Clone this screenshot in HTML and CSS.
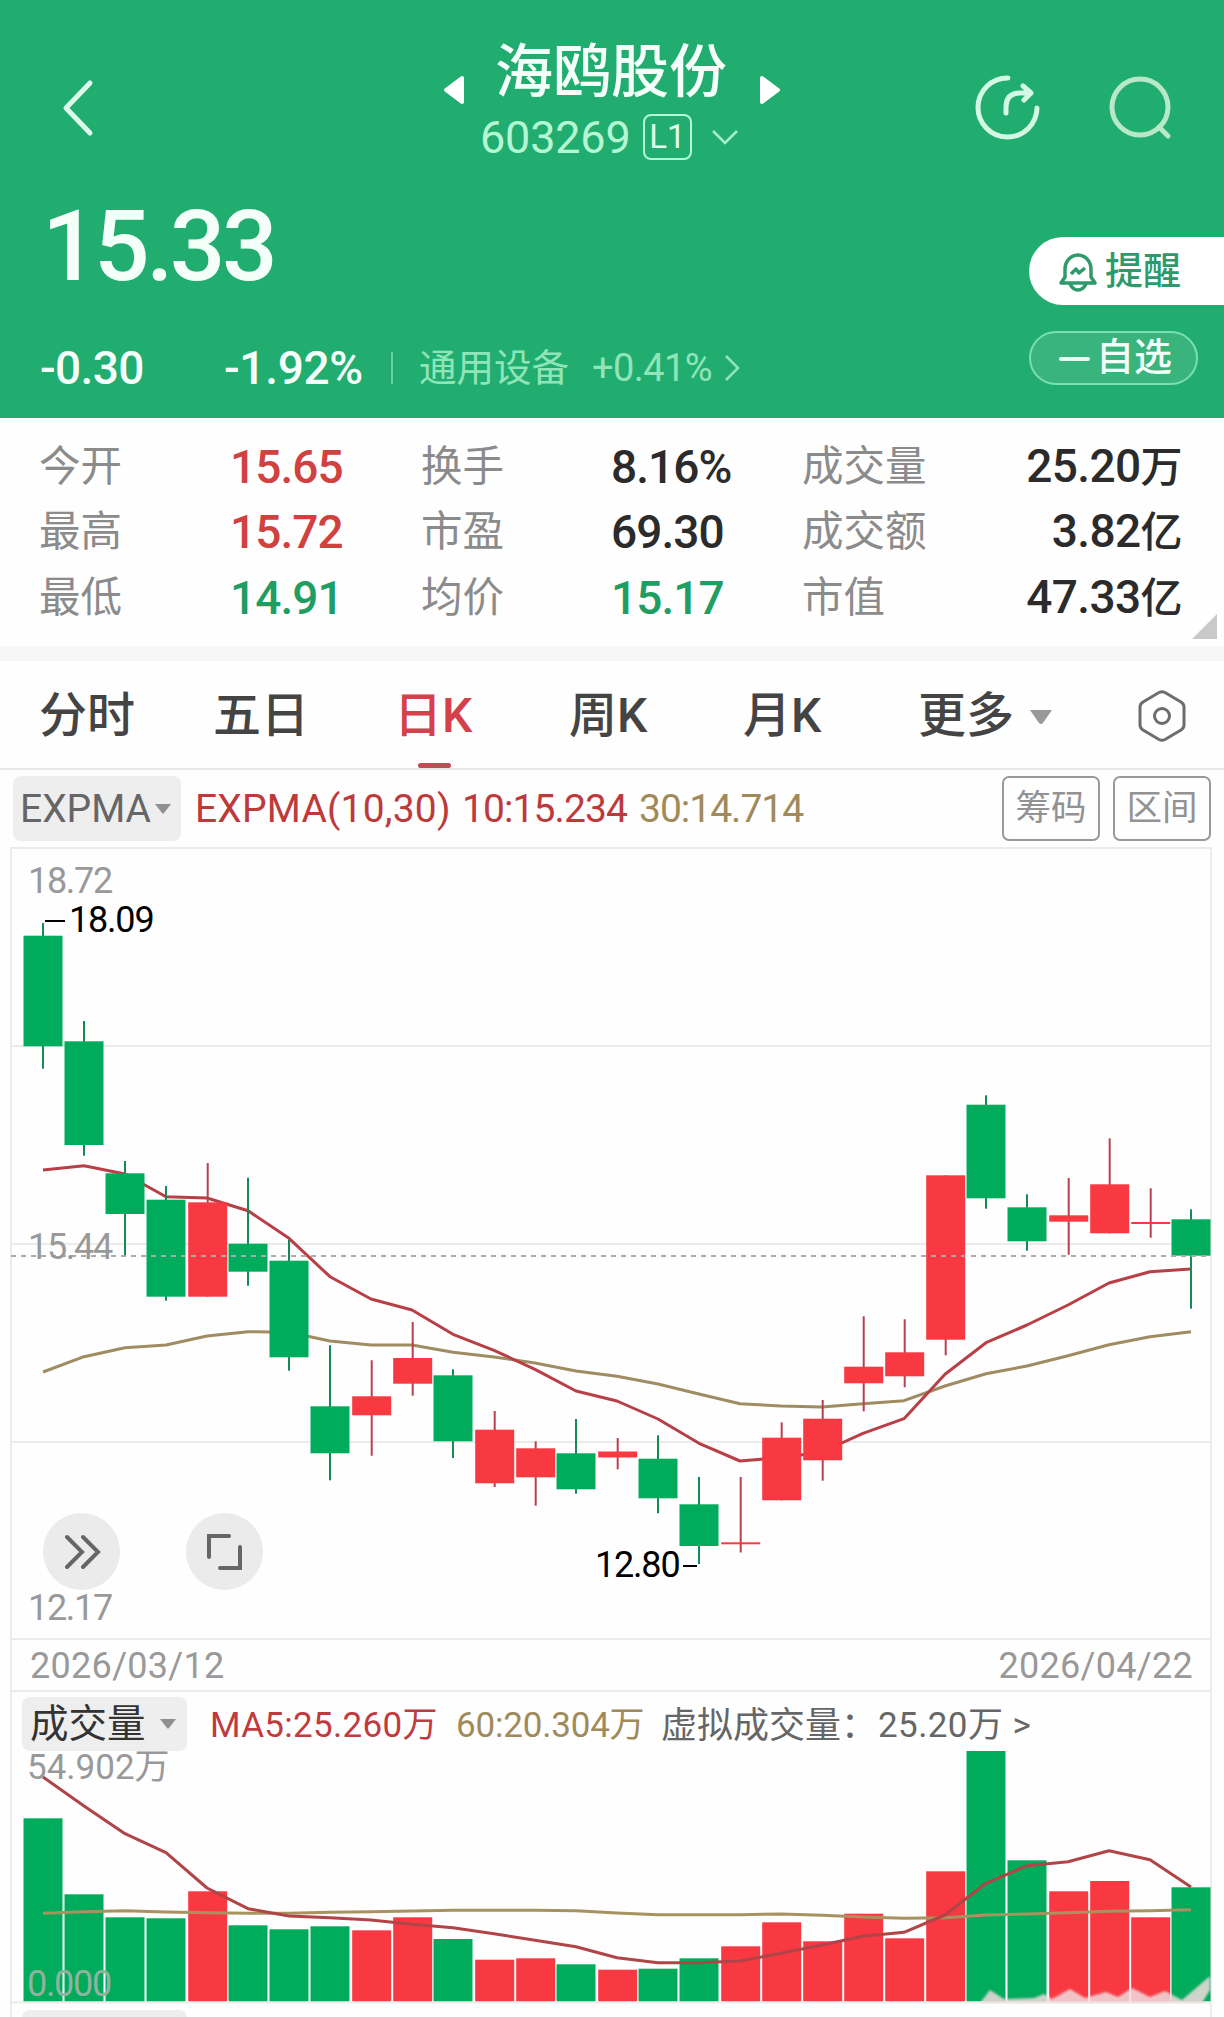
FILE: index.html
```html
<!DOCTYPE html>
<html lang="zh-CN">
<head>
    <meta charset="UTF-8">
    <meta name="viewport" content="width=device-width, initial-scale=1.0">
    <title>海鸥股份 603269</title>
    <link rel="stylesheet" href="styles.css">
</head>

<body>
    <!-- 顶部报价 -->
    <header class="quote">
        <div class="nav">
            <svg class="back" width="36" height="64" viewBox="0 0 36 64"><path d="M31 8 L7 33 L31 58"/></svg>
            <div class="stock">
                <div class="stock-row">
                    <svg class="tri" width="22" height="30" viewBox="0 0 22 30"><path d="M19 3 V27 L3 15 Z"/></svg>
                    <h1>海鸥股份</h1>
                    <svg class="tri" width="22" height="30" viewBox="0 0 22 30"><path d="M3 3 V27 L19 15 Z"/></svg>
                </div>
                <div class="code-row">
                    <span class="code">603269</span>
                    <span class="level">L1</span>
                    <svg class="down" width="28" height="18" viewBox="0 0 28 18"><path d="M2 3 L14 15 L26 3"/></svg>
                </div>
            </div>
            <div class="actions">
                <svg width="66" height="66" viewBox="0 0 66 66">
                    <path d="M33 3 A29.500 29.500 0 1 0 62 33"/>
                    <path d="M31 38 V32 Q31 19 44 18 H55 M48 11 L56 18 L49 25"/>
                </svg>
                <svg class="search" width="66" height="66" viewBox="0 0 66 66">
                    <circle cx="32" cy="32" r="28"/>
                    <path d="M51 52 L60 61"/>
                </svg>
            </div>
        </div>

        <div class="quote-body">
            <div class="quote-left">
                <div class="price">15.33</div>
                <div class="change-row">
                    <span class="change">-0.30</span>
                    <span class="percent">-1.92%</span>
                    <span class="divider"></span>
                    <span class="sector">通用设备</span>
                    <span class="sector-num">+0.41%</span>
                    <svg class="more" width="18" height="30" viewBox="0 0 18 30"><path d="M3 3 L15 15 L3 27"/></svg>
                </div>
            </div>
            <div class="quote-buttons">
                <div class="remind">
                    <svg width="38" height="40" viewBox="0 0 38 40">
                        <path d="M2 31 L6 25 V17 A13 14 0 0 1 32 17 V25 L36 31 Z M11 32 Q14 38 19 38 Q24 38 27 32"/>
                        <path d="M12 22 L17 17 L20 21 L26 16"/>
                    </svg>
                    <span>提醒</span>
                </div>
                <div class="watch"><i></i><span>自选</span></div>
            </div>
        </div>
    </header>

    <!-- 行情数据 -->
    <section class="stats">
        <span class="label">今开</span><span class="value up">15.65</span>
        <span class="label">换手</span><span class="value">8.16%</span>
        <span class="label">成交量</span><span class="value right">25.20<b>万</b></span>
        <span class="label">最高</span><span class="value up">15.72</span>
        <span class="label">市盈</span><span class="value">69.30</span>
        <span class="label">成交额</span><span class="value right">3.82<b>亿</b></span>
        <span class="label">最低</span><span class="value fall">14.91</span>
        <span class="label">均价</span><span class="value fall">15.17</span>
        <span class="label">市值</span><span class="value right">47.33<b>亿</b></span>
    </section>

    <!-- 周期切换 -->
    <nav class="tabs">
        <a>分时</a>
        <a>五日</a>
        <a class="active">日K</a>
        <a>周K</a>
        <a>月K</a>
        <a class="tab-more">更多<svg width="24" height="16" viewBox="0 0 24 16"><path d="M1 1 H23 L14 14 Q12 16 10 14 Z"/></svg></a>
        <svg class="setting" width="50" height="54" viewBox="0 0 50 54">
            <path d="M22 3.500 Q25 2 28 3.500 L44 13 Q47 15 47 18 V36 Q47 39 44 41 L28 50.500 Q25 52 22 50.500 L6 41 Q3 39 3 36 V18 Q3 15 6 13 Z"/>
            <circle cx="25" cy="27" r="7.500"/>
        </svg>
    </nav>

    <!-- 指标 -->
    <div class="indicator">
        <div class="pick">EXPMA<svg width="16" height="12" viewBox="0 0 16 12"><path d="M0 1 H16 L9 10 Q8 11 7 10 Z"/></svg></div>
        <span class="ind-name">EXPMA(10,30)</span>
        <span class="ind-fast">10:15.234</span>
        <span class="ind-slow">30:14.714</span>
        <div class="ind-buttons">
            <span>筹码</span>
            <span>区间</span>
        </div>
    </div>

    <main class="charts">
        <!-- K线 -->
        <div class="kline">
            <svg id="kline" width="1200" height="793" viewBox="11 847 1200 793"></svg>
            <span class="axis axis-top">18.72</span>
            <span class="axis axis-mid">15.44</span>
            <span class="axis axis-low">12.17</span>
            <span class="mark mark-high">18.09</span>
            <span class="mark mark-low">12.80</span>
            <div class="tools">
                <div class="tool"><svg width="40" height="40" viewBox="0 0 40 40"><path d="M5 5 L20 20 L5 35 M21 5 L36 20 L21 35"/></svg></div>
                <div class="tool"><svg width="40" height="40" viewBox="0 0 40 40"><path d="M24 4 H4 V25 M35 15 V36 H15"/></svg></div>
            </div>
        </div>
        <div class="dates">
            <span>2026/03/12</span>
            <span>2026/04/22</span>
        </div>

        <!-- 成交量 -->
        <div class="volume">
            <svg id="volume" width="1200" height="314" viewBox="11 1690 1200 314"></svg>
            <div class="volume-head">
                <div class="pick">成交量<svg width="16" height="12" viewBox="0 0 16 12"><path d="M0 1 H16 L9 10 Q8 11 7 10 Z"/></svg></div>
                <span class="vol-fast">MA5:25.260万</span>
                <span class="vol-slow">60:20.304万</span>
                <span class="vol-virtual">虚拟成交量：</span>
                <span class="vol-num">25.20万 &gt;</span>
            </div>
            <span class="axis axis-max">54.902万</span>
            <span class="axis axis-zero">0.000</span>
        </div>
        <div class="next"><div class="next-pick"></div></div>
    </main>

    <script src="chart.js"></script>
</body>
</html>
```
FILE: styles.css
```css
body {
    font-family: Roboto, "Noto Sans CJK SC", sans-serif;
    background-color: #fefefe;
    color: #2b2b2b;
    margin: 0;
    width: 1224px;
    height: 2017px;
    overflow: hidden;
}

* {
    box-sizing: border-box;
}

svg {
    display: block;
    flex: none;
}

span {
    white-space: nowrap;
}

/* 顶部报价 */
.quote {
    height: 418px;
    background-color: #22ad70;
    color: #f4fff9;
    overflow: hidden;
}

.nav {
    display: flex;
    align-items: flex-start;
    height: 190px;
    padding-left: 59px;
}

.back {
    margin-top: 75px;
    fill: none;
    stroke: #dcfbea;
    stroke-width: 5;
    stroke-linecap: round;
    stroke-linejoin: round;
}

.stock {
    width: 350px;
    margin: 31px 0 0 342px;
}

.stock-row {
    display: flex;
    align-items: center;
    height: 80px;
    padding-left: 6px;
}

.stock-row h1 {
    font-size: 58px;
    font-weight: 500;
    line-height: 80px;
    margin: 2px 32px 0 30px;
    width: 232px;
    white-space: nowrap;
}

.tri {
    margin-top: 37px;
    fill: #fff;
    stroke: #fff;
    stroke-width: 4;
    stroke-linejoin: round;
}

.code-row {
    display: flex;
    align-items: center;
    height: 52px;
    padding-left: 43px;
}

.code {
    width: 163px;
    font-size: 45px;
    letter-spacing: -0.2px;
    color: #b5f7d3;
}

.level {
    width: 49px;
    height: 46px;
    border: 2px solid #b5f7d3;
    border-radius: 8px;
    font-size: 33px;
    line-height: 42px;
    text-align: center;
    color: #e0ffee;
}

.down {
    margin-left: 19px;
    fill: none;
    stroke: #a5efc8;
    stroke-width: 2.5;
}

.actions {
    display: flex;
    gap: 67px;
    margin: 75px 0 0 188px;
    fill: none;
    stroke: #d3f9e5;
    stroke-width: 5;
    stroke-linecap: round;
    stroke-linejoin: round;
}

.search {
    stroke: #b9e8c9;
}

.quote-body {
    display: flex;
    justify-content: space-between;
}

.price {
    height: 112px;
    padding-left: 42px;
    font-size: 98px;
    font-weight: 500;
    line-height: 114px;
    letter-spacing: -3.6px;
}

.change-row {
    display: flex;
    align-items: center;
    height: 60px;
    margin-top: 36px;
    padding-left: 40px;
    font-size: 46px;
    font-weight: 500;
}

.change {
    width: 184px;
    letter-spacing: -0.6px;
}

.percent {
    width: 167px;
    letter-spacing: -0.3px;
}

.divider {
    width: 2px;
    height: 32px;
    background-color: #6fcea0;
}

.sector {
    margin: -7px 0 0 26px;
    width: 173px;
    font-size: 37.500px;
    font-weight: 400;
    color: #90e5b8;
}

.sector-num {
    width: 128px;
    font-size: 38px;
    font-weight: 400;
    color: #90e5b8;
    letter-spacing: -0.6px;
}

.more {
    margin-left: 3px;
    fill: none;
    stroke: #90e5b8;
    stroke-width: 2.5;
}

.quote-buttons {
    width: 195px;
    padding-top: 47px;
}

.remind {
    display: flex;
    align-items: center;
    height: 68px;
    padding-left: 30px;
    background-color: #fff;
    border-radius: 34px 0 0 34px;
    color: #2e9a6b;
    font-size: 38px;
    font-weight: 500;
}

.remind svg {
    margin: 2px 8px 0 0;
    fill: none;
    stroke: #2e9a6b;
    stroke-width: 3.5;
    stroke-linejoin: round;
}

.remind span {
    line-height: 60px;
    margin-top: -1px;
}

.watch {
    display: flex;
    align-items: center;
    width: 169px;
    height: 54px;
    margin-top: 26px;
    padding-left: 28px;
    background-color: #39b47c;
    border: 2px solid #7be0ae;
    border-radius: 27px;
    font-size: 38px;
    font-weight: 500;
}

.watch i {
    width: 31px;
    height: 4px;
    margin: 2px 6px 0 0;
    border-radius: 2px;
    background-color: #e5fff2;
}

.watch span {
    line-height: 50px;
    margin-top: -2px;
}

/* 行情数据 */
.stats {
    position: relative;
    display: grid;
    grid-template-columns: 191px 191px 190px 191px 180px 200px;
    grid-auto-rows: 65.5px;
    align-items: center;
    height: 228px;
    padding: 16px 0 0 39px;
}

.stats::after {
    content: "";
    position: absolute;
    right: 7px;
    bottom: 7px;
    border-left: 25px solid transparent;
    border-bottom: 25px solid #c9c9c9;
}

.label {
    font-size: 41.500px;
    color: #8b8b8b;
    line-height: 60px;
}

.value {
    font-size: 46px;
    font-weight: 500;
    letter-spacing: -0.9px;
    line-height: 58px;
}

.value b {
    font-size: 42px;
    font-weight: 500;
}

.value.right {
    letter-spacing: -0.6px;
    text-align: right;
}

.up {
    color: #d0413f;
}

.fall {
    color: #1f9d63;
}

/* 周期切换 */
.tabs {
    display: flex;
    height: 124px;
    padding-left: 39px;
    border-top: 15px solid #f7f7f7;
    border-bottom: 2px solid #e9e9e9;
    font-size: 48px;
    font-weight: 500;
    line-height: 110px;
    color: #444;
}

.tabs a {
    position: relative;
    flex: none;
    width: 174px;
}

.tabs a:nth-child(2) {
    width: 181px;
}

.tabs a:nth-child(3) {
    width: 175px;
}

.tabs a:nth-child(5) {
    width: 175px;
}

.tabs .active {
    color: #d5404d;
}

.active::after {
    content: "";
    position: absolute;
    left: 24px;
    bottom: 0;
    width: 33px;
    height: 5px;
    border-radius: 3px;
    background-color: #c44a55;
}

.tabs .tab-more {
    display: flex;
    width: 219px;
}

.tab-more svg {
    margin: 48px 0 0 15px;
    fill: #999;
}

.setting {
    margin-top: 28px;
    fill: none;
    stroke: #6d6d6d;
    stroke-width: 3;
}

/* 指标 */
.indicator {
    display: flex;
    align-items: center;
    height: 77px;
    padding: 2px 13px 2px 13px;
    font-size: 39px;
}

.pick {
    display: flex;
    align-items: center;
    flex: none;
    background-color: #eee;
    border-radius: 8px;
    color: #666;
}

.pick svg {
    fill: #909090;
}

.indicator .pick {
    width: 168px;
    height: 65px;
    padding-left: 7px;
}

.indicator .pick svg {
    margin-left: 4px;
}

.ind-name {
    width: 281px;
    padding-left: 14px;
    letter-spacing: 0.2px;
    color: #bd3a3c;
}

.ind-fast {
    width: 177px;
    letter-spacing: -0.9px;
    color: #bd3a3c;
}

.ind-slow {
    letter-spacing: -1px;
    color: #a08a5a;
}

.ind-buttons {
    display: flex;
    gap: 13px;
    margin-left: auto;
    font-size: 35.500px;
    color: #929292;
}

.ind-buttons span {
    width: 98px;
    height: 65px;
    border: 2px solid #999;
    border-radius: 7px;
    line-height: 61px;
    text-align: center;
}

/* K线 */
.charts {
    width: 1202px;
    margin-left: 10px;
    border: 2px solid #ececec;
    border-top: none;
}

.kline,
.volume {
    position: relative;
}

.kline > svg,
.volume > svg {
    margin-left: -1px;
}

.axis {
    position: absolute;
    left: 16px;
    font-size: 36px;
    line-height: 40px;
    letter-spacing: -1.3px;
    color: #999;
}

.axis-top {
    top: 14px;
}

.axis-mid {
    top: 380px;
}

.axis-low {
    top: 741px;
}

.mark {
    position: absolute;
    font-size: 36px;
    line-height: 40px;
    letter-spacing: -1.2px;
    color: #000;
}

.mark-high {
    left: 57px;
    top: 53px;
}

.mark-low {
    left: 583px;
    top: 698px;
}

.tools {
    position: absolute;
    left: 31px;
    top: 666px;
    display: flex;
    gap: 66px;
}

.tool {
    display: flex;
    align-items: center;
    justify-content: center;
    width: 77px;
    height: 77px;
    border-radius: 50%;
    background-color: #ebebeb;
}

.tool svg {
    fill: none;
    stroke: #666;
    stroke-width: 4;
    stroke-linecap: round;
}

.dates {
    display: flex;
    justify-content: space-between;
    height: 50px;
    padding: 0 17px 0 18px;
    font-size: 36px;
    line-height: 52px;
    letter-spacing: 0.3px;
    color: #999;
}

/* 成交量 */
.volume-head {
    position: absolute;
    left: 10px;
    top: 7px;
    display: flex;
    height: 54px;
    font-size: 35px;
    line-height: 58px;
}

.volume-head .pick {
    width: 165px;
    height: 54px;
    padding-left: 8px;
    font-size: 38.500px;
    color: #333;
    line-height: 54px;
}

.volume-head .pick svg {
    margin-left: 14px;
}

.vol-fast {
    width: 269px;
    padding-left: 23px;
    letter-spacing: 0.3px;
    color: #c03a40;
}

.vol-slow {
    width: 205px;
    letter-spacing: -0.2px;
    color: #a08a5a;
}

.vol-virtual {
    width: 217px;
    font-size: 36px;
    color: #666;
}

.vol-num {
    letter-spacing: 0.4px;
    color: #666;
}

.axis-max {
    top: 58px;
    left: 15px;
    font-size: 35px;
    letter-spacing: 0;
}

.axis-zero {
    top: 274px;
    left: 15px;
    color: #8fb39f;
}

.haze {
    fill: #f2dcde;
    opacity: 0.85;
    filter: blur(1px);
}

.next {
    height: 20px;
    padding: 6px 0 0 10px;
}

.next-pick {
    width: 165px;
    height: 54px;
    border-radius: 8px;
    background-color: #eee;
}
```
FILE: chart.js
```js
const GREEN = '#00ab5c';
const RED = '#f83942';
const STEP = 41;
const FIRST = 43;

// [颜色, 最高, 实体上沿, 实体下沿, 最低, 成交量上沿]
const candles = [
    ['g', 923, 935.7, 1046.3, 1068.7, 1818.3],
    ['g', 1021, 1041.3, 1145, 1155.7, 1894.3],
    ['g', 1161, 1173.3, 1214, 1255, 1917.3],
    ['g', 1186, 1199.7, 1296.7, 1300.7, 1918.3],
    ['r', 1163, 1202.3, 1296.7, 1296.7, 1891.3],
    ['g', 1177.7, 1243.7, 1271.7, 1285.7, 1925.3],
    ['g', 1240, 1260.7, 1357.3, 1370.7, 1929.3],
    ['g', 1345.3, 1406.3, 1453.3, 1480.3, 1926.3],
    ['r', 1360.3, 1396.3, 1415.3, 1455.7, 1930.3],
    ['r', 1322, 1358, 1383.7, 1395.7, 1917.3],
    ['g', 1369.3, 1375.3, 1441.3, 1458, 1939],
    ['r', 1411, 1429.7, 1483.3, 1487, 1959.7],
    ['r', 1441.3, 1448.3, 1477.3, 1505.7, 1958.3],
    ['g', 1419, 1453.3, 1489.3, 1493.7, 1964.3],
    ['r', 1438, 1451.5, 1457.5, 1469.3, 1969.7],
    ['g', 1435.3, 1458.7, 1498.3, 1513.3, 1968.7],
    ['g', 1477, 1504.3, 1546, 1564, 1958.3],
    ['r', 1477, 1542.3, 1544.3, 1552.5, 1946.3],
    ['r', 1422.3, 1437.7, 1500.3, 1500.3, 1922.3],
    ['r', 1400, 1418.7, 1460.3, 1480.7, 1941.3],
    ['r', 1316.3, 1366.7, 1383.3, 1411.3, 1913.7],
    ['r', 1319.3, 1352.3, 1376.3, 1387.3, 1938.3],
    ['r', 1175.3, 1175.3, 1339.7, 1355.3, 1871.3],
    ['g', 1095.3, 1104.7, 1198.3, 1208.7, 1751],
    ['g', 1194.3, 1207.3, 1241.3, 1250.7, 1860.3],
    ['r', 1178, 1215.3, 1221.7, 1254.7, 1891.3],
    ['r', 1138.3, 1184.3, 1233.3, 1233.3, 1881],
    ['r', 1188.3, 1222, 1224, 1237.7, 1917.3],
    ['g', 1209.3, 1219.3, 1255.7, 1308.7, 1887.3]
];

const expma10 = [1170, 1165.7, 1174, 1196.7, 1198, 1210.7, 1238.3, 1276.7, 1299, 1310, 1334.3, 1350.3, 1369.3, 1391, 1401, 1419, 1443.3, 1461, 1457.7, 1452, 1433.3, 1418.7, 1374.3, 1342.7, 1325, 1305, 1283, 1271.7, 1269];
const expma30 = [1372, 1356.7, 1347.7, 1345, 1336, 1331.7, 1332.3, 1341, 1345, 1345, 1352.3, 1357, 1363, 1371, 1376.3, 1384, 1394, 1403.7, 1406, 1407, 1403.7, 1400.7, 1386, 1373.7, 1366, 1355.7, 1344.7, 1336.7, 1331.7];
const ma5 = [1777, 1806, 1833.7, 1852.7, 1888, 1908.7, 1916, 1917.7, 1920, 1924.3, 1927.7, 1933.7, 1940.3, 1946.7, 1957.7, 1962.7, 1962.7, 1961, 1953.3, 1945, 1936.3, 1932.3, 1915, 1883.3, 1865.7, 1861.7, 1850.7, 1859.7, 1887];
const ma60 = [1913.3, 1911.7, 1910.7, 1912, 1912.7, 1913.3, 1913.3, 1912.3, 1911.7, 1911, 1910.3, 1910.3, 1910.3, 1910.7, 1913, 1914.7, 1914.7, 1914.7, 1914, 1915.3, 1917, 1918.3, 1917.7, 1915, 1914, 1912.7, 1911.3, 1910.7, 1909.7];

function rect(x, y, w, h, fill) {
    return `<rect x="${x}" y="${y}" width="${w}" height="${h}" fill="${fill}"/>`;
}

function gridLine(y) {
    return rect(11, y - 1, 1200, 2, '#ebebeb');
}

function curve(values, color) {
    const points = values.map((y, i) => `${FIRST + i * STEP},${y}`).join(' ');
    return `<polyline points="${points}" fill="none" stroke="${color}" stroke-width="3" stroke-linejoin="round"/>`;
}

// K线图
let k = gridLine(848) + gridLine(1046) + gridLine(1244) + gridLine(1442) + gridLine(1639);
k += curve(expma30, '#a08c62') + curve(expma10, '#b83f46');
candles.forEach(([c, high, top, bottom, low], i) => {
    const x = FIRST + i * STEP + (c === 'r' ? 0.7 : 0);
    k += rect(x - 1, high, 2, low - high, c === 'r' ? '#b8414c' : '#158a55');
    k += rect(x - 19.5, top, 39, bottom - top, c === 'r' ? RED : GREEN);
});
k += '<path d="M11 1256 H1211" stroke="#aaa" stroke-width="2" stroke-dasharray="5 5"/>';
k += rect(45, 920, 20, 2, '#000') + rect(683, 1565, 14, 2, '#000');
document.getElementById('kline').innerHTML = k;

// 成交量图
let v = gridLine(1691);
candles.forEach((item, i) => {
    const x = FIRST + i * STEP + (item[0] === 'r' ? 0.7 : 0);
    v += rect(x - 19.5, item[5], 39, 2001.5 - item[5], item[0] === 'r' ? RED : GREEN);
});
v += gridLine(2002.5) + curve(ma60, '#a8925f') + curve(ma5, '#b04446');
// 右下角淡色波纹
v += '<path class="haze" d="M980 2003 L990 1990 L1004 1999 L1034 1998 L1044 1994 L1052 1999 L1070 1989 L1085 1998 L1106 1992 L1118 1997 L1132 1988 L1150 1997 L1165 1991 L1182 2000 L1196 1988 L1210 1976 V1990 L1202 2003 Z"/>';
document.getElementById('volume').innerHTML = v;
```
